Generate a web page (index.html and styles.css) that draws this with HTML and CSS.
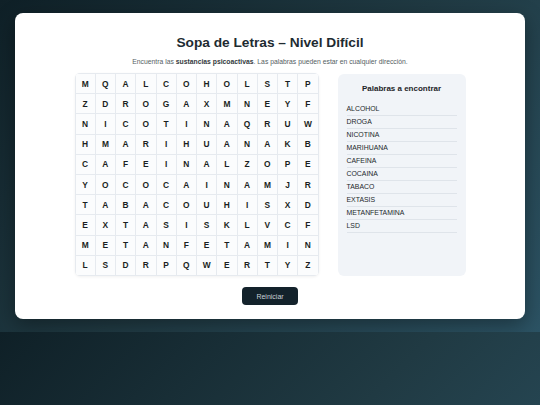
FILE: index.html
```html
<!DOCTYPE html>
<html lang="es">
<head>
<meta charset="utf-8">
<title>Sopa de Letras</title>
<link rel="stylesheet" href="styles.css">
</head>
<body>
<div class="card">
  <h1 class="title">Sopa de Letras – Nivel Difícil</h1>
  <p class="subtitle">Encuentra las <b>sustancias psicoactivas</b>. Las palabras pueden estar en cualquier dirección.</p>
  <div class="game">
    <div class="grid">
      <span>M</span><span>Q</span><span>A</span><span>L</span><span>C</span><span>O</span><span>H</span><span>O</span><span>L</span><span>S</span><span>T</span><span>P</span>
      <span>Z</span><span>D</span><span>R</span><span>O</span><span>G</span><span>A</span><span>X</span><span>M</span><span>N</span><span>E</span><span>Y</span><span>F</span>
      <span>N</span><span>I</span><span>C</span><span>O</span><span>T</span><span>I</span><span>N</span><span>A</span><span>Q</span><span>R</span><span>U</span><span>W</span>
      <span>H</span><span>M</span><span>A</span><span>R</span><span>I</span><span>H</span><span>U</span><span>A</span><span>N</span><span>A</span><span>K</span><span>B</span>
      <span>C</span><span>A</span><span>F</span><span>E</span><span>I</span><span>N</span><span>A</span><span>L</span><span>Z</span><span>O</span><span>P</span><span>E</span>
      <span>Y</span><span>O</span><span>C</span><span>O</span><span>C</span><span>A</span><span>I</span><span>N</span><span>A</span><span>M</span><span>J</span><span>R</span>
      <span>T</span><span>A</span><span>B</span><span>A</span><span>C</span><span>O</span><span>U</span><span>H</span><span>I</span><span>S</span><span>X</span><span>D</span>
      <span>E</span><span>X</span><span>T</span><span>A</span><span>S</span><span>I</span><span>S</span><span>K</span><span>L</span><span>V</span><span>C</span><span>F</span>
      <span>M</span><span>E</span><span>T</span><span>A</span><span>N</span><span>F</span><span>E</span><span>T</span><span>A</span><span>M</span><span>I</span><span>N</span>
      <span>L</span><span>S</span><span>D</span><span>R</span><span>P</span><span>Q</span><span>W</span><span>E</span><span>R</span><span>T</span><span>Y</span><span>Z</span>
    </div>
    <div class="words">
      <h2 class="words-title">Palabras a encontrar</h2>
      <ul class="word-list">
        <li>ALCOHOL</li>
        <li>DROGA</li>
        <li>NICOTINA</li>
        <li>MARIHUANA</li>
        <li>CAFEINA</li>
        <li>COCAINA</li>
        <li>TABACO</li>
        <li>EXTASIS</li>
        <li>METANFETAMINA</li>
        <li>LSD</li>
      </ul>
    </div>
  </div>
  <div class="actions">
    <button class="btn">Reiniciar</button>
  </div>
</div>
</body>
</html>
```
FILE: styles.css
```css
html {
  margin: 0;
}
body {
  margin: 0;
  padding: 13px 15px;
  font-family: "Liberation Sans", Arial, sans-serif;
  background: linear-gradient(135deg, #0f2027, #203a43, #2c5364);
}
.card {
  background: #ffffff;
  border-radius: 8px;
  box-shadow: 0 6px 20px rgba(0, 0, 0, 0.35);
  padding: 21px 20px 12px;
  height: 306px;
  box-sizing: border-box;
}
.title {
  margin: 0;
  text-align: center;
  font-size: 13.7px;
  font-weight: bold;
  color: #1e2b31;
  line-height: 17px;
}
.subtitle {
  margin: 6px 0 0;
  text-align: center;
  font-size: 6.8px;
  color: #555e63;
  line-height: 9px;
}
.subtitle b {
  color: #333a3e;
}
.game {
  display: flex;
  justify-content: center;
  gap: 19px;
  margin-top: 7px;
}
.grid {
  display: grid;
  grid-template-columns: repeat(12, 1fr);
  grid-template-rows: repeat(10, 1fr);
  width: 244px;
  height: 203px;
  gap: 1px;
  padding: 1px;
  box-sizing: border-box;
  background: #e6eaef;
  border-radius: 5px;
  overflow: hidden;
  box-shadow: 0 1px 3px rgba(0, 0, 0, 0.06);
}
.grid span {
  background: #fbfcfd;
  display: flex;
  align-items: center;
  justify-content: center;
  font-size: 8.4px;
  font-weight: bold;
  color: #1a1f22;
}
.words {
  width: 128px;
  background: #f1f4f8;
  border-radius: 6px;
  padding: 9px 9px 8px;
  box-sizing: border-box;
  margin-top: 1px;
}
.words-title {
  margin: 0 0 9px;
  text-align: center;
  font-size: 8px;
  font-weight: bold;
  color: #1e2528;
  line-height: 11px;
}
.word-list {
  list-style: none;
  margin: 0;
  padding: 0;
}
.word-list li {
  font-size: 6.9px;
  color: #22282b;
  line-height: 12px;
  border-bottom: 1px solid #dfe4ea;
  padding-left: 0;
}
.actions {
  display: flex;
  justify-content: center;
  margin-top: 11px;
}
.btn {
  width: 56px;
  height: 18px;
  background: #13222b;
  color: #c9d1d6;
  border: none;
  border-radius: 4px;
  font-family: "Liberation Sans", Arial, sans-serif;
  font-size: 7px;
  padding: 0;
}
```
